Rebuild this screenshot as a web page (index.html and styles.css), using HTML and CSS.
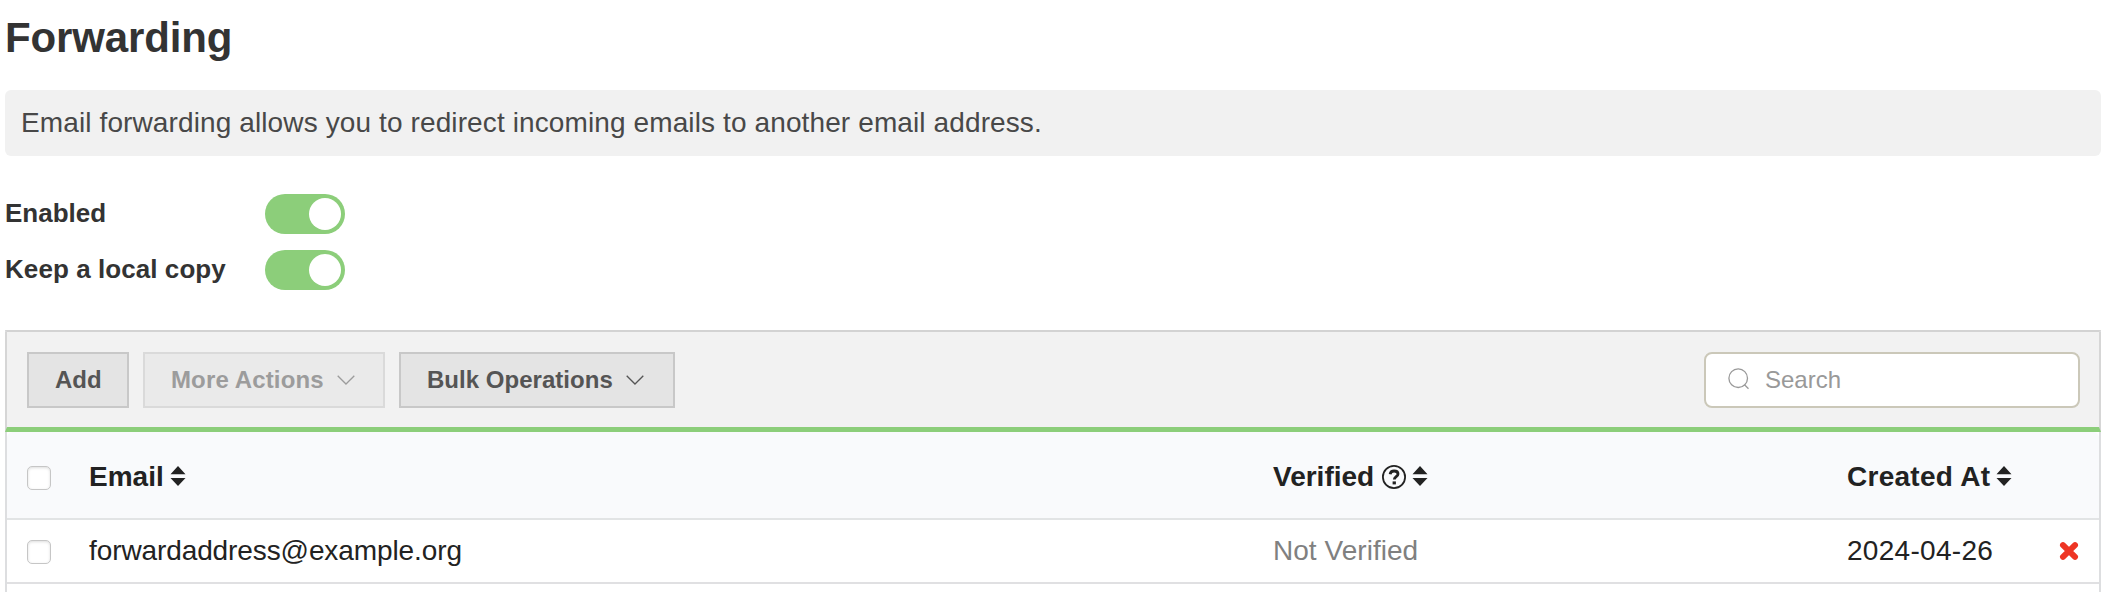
FILE: index.html
```html
<!DOCTYPE html>
<html lang="en">
<head>
<meta charset="utf-8">
<title>Forwarding</title>
<link rel="stylesheet" href="styles.css">
</head>
<body>
<main class="page">
  <h1 class="title">Forwarding</h1>
  <p class="hint">Email forwarding allows you to redirect incoming emails to another email address.</p>
  <section class="settings">
    <div class="setting"><span class="setting-label">Enabled</span><span class="toggle"><span class="knob"></span></span></div>
    <div class="setting"><span class="setting-label label-keep">Keep a local copy</span><span class="toggle"><span class="knob"></span></span></div>
  </section>
  <section class="list">
    <div class="toolbar">
      <button class="btn btn-add">Add</button>
      <button class="btn btn-more"><span>More Actions</span><svg class="chevron" viewBox="0 0 18 10"><path d="M.7.7 9 9 17.3.7"/></svg></button>
      <button class="btn btn-bulk"><span>Bulk Operations</span><svg class="chevron" viewBox="0 0 18 10"><path d="M.7.7 9 9 17.3.7"/></svg></button>
      <label class="search"><svg class="search-icon" viewBox="0 0 22 22"><circle cx="10.2" cy="10.2" r="9.3"/><path d="m16.500 16.700 4 4"/></svg><span>Search</span></label>
    </div>
    <div class="row head">
      <div><span class="check"></span></div>
      <div class="cell"><span class="heading">Email</span><svg class="sort" viewBox="0 0 16 20"><path d="M8 0 15.500 8.200H.5ZM.5 12h15L8 20Z"/></svg></div>
      <div class="cell"><span class="heading">Verified</span><svg class="help" viewBox="0 0 24 24"><circle cx="12" cy="12" r="11.1"/><path class="hook" d="M8.100 9.200C8.500 6.900 10 6 12.100 6c2.400 0 3.900 1.200 3.900 3 0 2.700-3.700 2.700-3.700 5.500"/><path class="dot" d="M10.600 16.400h3.300v3h-3.300z"/></svg><svg class="sort" viewBox="0 0 16 20"><path d="M8 0 15.500 8.200H.5ZM.5 12h15L8 20Z"/></svg></div>
      <div class="cell"><span class="heading heading-created">Created At</span><svg class="sort" viewBox="0 0 16 20"><path d="M8 0 15.500 8.200H.5ZM.5 12h15L8 20Z"/></svg></div>
      <div></div>
    </div>
    <div class="row">
      <div><span class="check"></span></div>
      <div class="cell address">forwardaddress@example.org</div>
      <div class="cell muted">Not Verified</div>
      <div class="cell date">2024-04-26</div>
      <div><svg class="remove" viewBox="0 0 20 20"><path d="m4 4.200 12 11.600M16 4.200 4 15.800"/></svg></div>
    </div>
  </section>
</main>
</body>
</html>
```
FILE: styles.css
```css
* { box-sizing: border-box; }
body {
  margin: 0;
  height: 592px;
  overflow: hidden;
  background: #fff;
  color: #222;
  font-family: "Liberation Sans", Arial, sans-serif;
  font-size: 28px;
  white-space: nowrap;
}
svg { display: block; flex: none; }
.page { display: flex; flex-direction: column; height: 592px; padding: 0 3px 0 5px; }
.title { margin: 0; height: 90px; font-size: 42px; line-height: 75px; letter-spacing: -.15px; color: #333; }
.hint { margin: 0; height: 66px; padding-left: 16px; border-radius: 6px; background: #f1f1f1; color: #484848; line-height: 66px; letter-spacing: .115px; }
.settings { display: flex; flex-direction: column; gap: 16px; padding: 38px 0 40px; }
.setting { display: flex; height: 40px; font-size: 26px; font-weight: bold; line-height: 38px; color: #333; }
.setting-label { width: 260px; }
.label-keep { letter-spacing: .07px; }
.toggle { display: flex; justify-content: flex-end; align-items: center; width: 80px; height: 40px; padding: 4px; border-radius: 20px; background: #8cce7a; }
.knob { width: 32px; height: 32px; border-radius: 50%; background: #fff; }

.list { flex: 1; border: 2px solid #dddee0; border-top-color: #d3d3d3; border-bottom: 0; }
.toolbar { display: flex; align-items: flex-start; gap: 14px; height: 100px; margin: 0 -2px; padding: 20px 19px 0 20px; background: #f2f2f2; border: 2px solid #d6d6d6; border-top: 0; border-bottom: 5px solid #8cce7a; }
.btn { display: flex; align-items: center; height: 56px; padding: 0 0 0 26px; border: 2px solid #c8c8c8; background: #e4e4e4; color: #555; font: bold 24px "Liberation Sans", Arial, sans-serif; }
.btn-add { width: 102px; }
.btn-more { width: 242px; border-color: #dadada; background: #eaeaea; color: #9c9c9c; letter-spacing: .13px; }
.btn-bulk { width: 276px; letter-spacing: .03px; }
.chevron { width: 18px; height: 10px; margin-left: 13px; fill: none; stroke: currentColor; stroke-width: 1.3; }
.search { display: flex; align-items: center; width: 376px; height: 56px; margin-left: auto; padding-left: 22px; border: 2px solid #cbc8b9; border-radius: 8px; background: #fff; color: #999; font-size: 24px; }
.search-icon { width: 22px; height: 22px; margin: 0 15px 2px 0; fill: none; stroke: #999; stroke-width: 1.3; }

.row { display: grid; grid-template-columns: 82px 1184px 574px 212px 1fr; align-items: center; height: 64px; border-bottom: 2px solid #e0e0e2; }
.head { height: 88px; background: #f9fafc; font-weight: bold; border-bottom-color: #e2e4e5; border-radius: 6px 6px 0 0; }
.cell { display: flex; align-items: center; }
.heading { padding-top: 3px; }
.heading-created { letter-spacing: .27px; }
.address { letter-spacing: -.1px; }
.date { letter-spacing: .3px; }
.check { display: block; width: 24px; height: 24px; margin: 2px 0 0 20px; border: 1px solid #c6c6c6; border-radius: 5px; background: #fff; box-shadow: inset 0 1px 3px #ddd; }
.head .check { margin-top: 6px; }
.sort { width: 16px; height: 20px; margin: 2px 0 0 6px; fill: #222; }
.help { width: 24px; height: 24px; margin: 3px 0 0 8px; fill: none; stroke: #222; stroke-width: 1.8; }
.help .hook { stroke-width: 2.8; }
.help .dot { fill: #222; stroke: none; }
.muted { color: #808080; letter-spacing: .04px; }
.remove { width: 20px; height: 20px; fill: none; stroke: #ee3524; stroke-width: 6; stroke-linecap: round; }
```
